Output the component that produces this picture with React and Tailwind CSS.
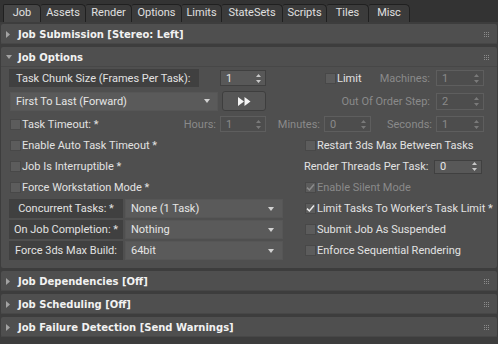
import React from "react";

const tabs = [
  { label: "Job", w: "w-[38px]", active: true },
  { label: "Assets", w: "w-[45px]" },
  { label: "Render", w: "w-[46px]" },
  { label: "Options", w: "w-[50px]" },
  { label: "Limits", w: "w-[40px]" },
  { label: "StateSets", w: "w-[61px]" },
  { label: "Scripts", w: "w-[44px]" },
  { label: "Tiles", w: "w-[42px]" },
  { label: "Misc", w: "w-[41px]" },
];

const Box = ({ checked, disabled }) => (
  <span className="flex h-[11px] w-[11px] shrink-0 items-center justify-center border border-[#484848] bg-[#5c5c5c]">
    {checked && (
      <svg width="9" height="9" viewBox="0 0 9 9">
        <path
          d="M1 4.6 L3.4 7 L8 1.6"
          fill="none"
          stroke={disabled ? "#8c8c8c" : "#ececec"}
          strokeWidth="1.5"
        />
      </svg>
    )}
  </span>
);

const Spinner = ({ value, disabled, className }) => (
  <div
    className={`flex shrink-0 items-center justify-between border pl-[5px] pr-[4px] ${
      disabled
        ? "border-[#5e5e5e] bg-[#4d4d4d] text-[#8a8a8a]"
        : "border-[#404040] bg-[#585858] text-[#e6e6e6]"
    } ${className}`}
  >
    <span>{value}</span>
    <svg width="5" height="9" viewBox="0 0 5 9">
      <path d="M2.5 0 L5 3 L0 3Z M0 6 L5 6 L2.5 9Z" fill={disabled ? "#7a7a7a" : "#c8c8c8"} />
    </svg>
  </div>
);

const Dropdown = ({ value, className }) => (
  <div
    className={`flex shrink-0 items-center justify-between border border-[#565656] bg-[#5a5a5a] pl-[5px] pr-[7px] text-[#e6e6e6] ${className}`}
  >
    <span>{value}</span>
    <svg width="6" height="4" viewBox="0 0 6 4">
      <path d="M0 0H6L3 4Z" fill="#d2d2d2" />
    </svg>
  </div>
);

const Grip = () => (
  <svg width="5" height="5" viewBox="0 0 5 5" fill="#8c8c8c">
    {[0, 2, 4].map((y) =>
      [0, 2, 4].map((x) => <rect key={`${x}-${y}`} x={x} y={y} width="1" height="1" />)
    )}
  </svg>
);

const Header = ({ title, open }) => (
  <div className="flex h-[20px] items-center pl-[5px] pr-[8px] shadow-[inset_0_-1px_0_#474747]">
    <span className="flex w-[12px] items-center">
      {open ? (
        <svg width="6" height="4" viewBox="0 0 6 4">
          <path d="M0 0H6L3 4Z" fill="#a3a3a3" />
        </svg>
      ) : (
        <svg width="4" height="7" viewBox="0 0 4 7">
          <path d="M0 0L4 3.5L0 7Z" fill="#a3a3a3" />
        </svg>
      )}
    </span>
    <span className="flex-1 font-['DejaVu_Sans',sans-serif] text-[10px] font-bold text-[#f2f2f2]">
      {title}
    </span>
    <Grip />
  </div>
);

const LabelBox = ({ children }) => (
  <div className="flex h-[19px] w-[114px] shrink-0 items-center justify-center bg-[#404040]">
    {children}
  </div>
);

const CheckRow = ({ label, checked, disabled, className = "" }) => (
  <div className={`flex h-[21px] items-center ${className}`}>
    <Box checked={checked} disabled={disabled} />
    <span className={`ml-[1px] ${disabled ? "text-[#8a8a8a]" : ""}`}>{label}</span>
  </div>
);

const JobOptions = () => (
  <div className="whitespace-nowrap pt-[2px] pb-[7px] text-[11px] leading-none text-[#e2e2e2]">
    <div className="flex h-[18px] items-center">
      <div className="ml-[8px] flex h-[18px] w-[190px] shrink-0 items-center bg-[#404040] pl-[7px]">
        Task Chunk Size (Frames Per Task):
      </div>
      <Spinner value="1" className="ml-[21px] h-[16px] w-[46px]" />
      <span className="ml-[59px]">
        <Box />
      </span>
      <span className="ml-[1px] w-[24px]">Limit</span>
      <span className="w-[69px] text-right text-[#8a8a8a]">Machines:</span>
      <Spinner value="1" disabled className="ml-[6px] h-[16px] w-[48px]" />
    </div>

    <div className="mt-[4px] flex h-[20px] items-center">
      <Dropdown value="First To Last (Forward)" className="ml-[9px] h-[19px] w-[208px]" />
      <button className="ml-[4px] flex h-[20px] w-[44px] items-center justify-center rounded-[3px] border border-[#3e3e3e] bg-[#565656]">
        <svg width="13" height="9" viewBox="0 0 13 9">
          <path d="M0 0L6 4.5L0 9Z M6.5 0L12.5 4.5L6.5 9Z" fill="#f4f4f4" />
        </svg>
      </button>
      <span className="w-[164px] text-right text-[#8a8a8a]">Out Of Order Step:</span>
      <Spinner value="2" disabled className="ml-[6px] h-[17px] w-[48px]" />
    </div>

    <div className="mt-[5px] flex h-[16px] items-center">
      <span className="ml-[9px]">
        <Box />
      </span>
      <div className="flex w-[195px] justify-between pl-[1px]">
        <span>Task Timeout: *</span>
        <span className="text-[#8a8a8a]">Hours:</span>
      </div>
      <Spinner value="1" disabled className="ml-[4px] h-[16px] w-[46px]" />
      <span className="w-[54px] text-right text-[#8a8a8a]">Minutes:</span>
      <Spinner value="0" disabled className="ml-[4px] h-[16px] w-[47px]" />
      <span className="w-[61px] text-right text-[#8a8a8a]">Seconds:</span>
      <Spinner value="1" disabled className="ml-[4px] h-[16px] w-[48px]" />
    </div>

    <div className="mt-[3px] flex">
      <div className="ml-[8px] flex w-[274px] shrink-0 flex-col">
        <CheckRow label="Enable Auto Task Timeout *" className="pl-[1px]" />
        <CheckRow label="Job Is Interruptible *" className="pl-[1px]" />
        <CheckRow label="Force Workstation Mode *" className="pl-[1px]" />
        {[
          ["Concurrent Tasks: *", "None (1 Task)"],
          ["On Job Completion: *", "Nothing"],
          ["Force 3ds Max Build:", "64bit"],
        ].map(([label, value]) => (
          <div key={label} className="flex h-[21px] items-center">
            <LabelBox>{label}</LabelBox>
            <Dropdown value={value} className="ml-[2px] h-[19px] w-[158px] pr-[8px]" />
          </div>
        ))}
      </div>
      <div className="ml-[21px] flex w-[192px] shrink-0 flex-col">
        <CheckRow label="Restart 3ds Max Between Tasks" className="pl-[1px]" />
        <div className="flex h-[21px] items-center">
          <span className="w-[130px]">Render Threads Per Task:</span>
          <Spinner value="0" className="h-[14px] w-[48px]" />
        </div>
        <CheckRow label="Enable Silent Mode" checked disabled className="pl-[1px]" />
        <CheckRow label="Limit Tasks To Worker's Task Limit *" checked className="pl-[1px]" />
        <CheckRow label="Submit Job As Suspended" className="pl-[1px]" />
        <CheckRow label="Enforce Sequential Rendering" className="pl-[1px]" />
      </div>
    </div>
  </div>
);

export default function App() {
  return (
    <div className="h-[344px] w-[498px] overflow-hidden bg-[#3d3d3d] font-[Roboto,sans-serif]">
      <div className="flex h-[22px] items-end bg-[#333333] pl-[3px]">
        {tabs.map((t, i) => (
          <div
            key={t.label}
            className={`flex h-[18px] shrink-0 items-center justify-center rounded-tl-[2px] rounded-tr-[5px] border-t border-r border-[#202020] text-[11px] text-[#e0e0e0] ${
              i === 0 ? "border-l" : ""
            } ${t.active ? "bg-[#464646]" : "bg-[#3b3b3b]"} ${t.w}`}
          >
            {t.label}
          </div>
        ))}
      </div>

      <div className="flex flex-col gap-[3px] pt-[2px]">
        <div className="ml-[1px] w-[496px] rounded-[2px] bg-[#4f4f4f]">
          <Header title="Job Submission [Stereo: Left]" />
        </div>
        <div className="ml-[1px] w-[496px] rounded-[2px] bg-[#4f4f4f]">
          <Header title="Job Options" open />
          <JobOptions />
        </div>
        <div className="ml-[1px] w-[496px] rounded-[2px] bg-[#4f4f4f]">
          <Header title="Job Dependencies [Off]" />
        </div>
        <div className="ml-[1px] w-[496px] rounded-[2px] bg-[#4f4f4f]">
          <Header title="Job Scheduling [Off]" />
        </div>
        <div className="ml-[1px] w-[496px] rounded-[2px] bg-[#4f4f4f]">
          <Header title="Job Failure Detection [Send Warnings]" />
        </div>
      </div>
    </div>
  );
}
